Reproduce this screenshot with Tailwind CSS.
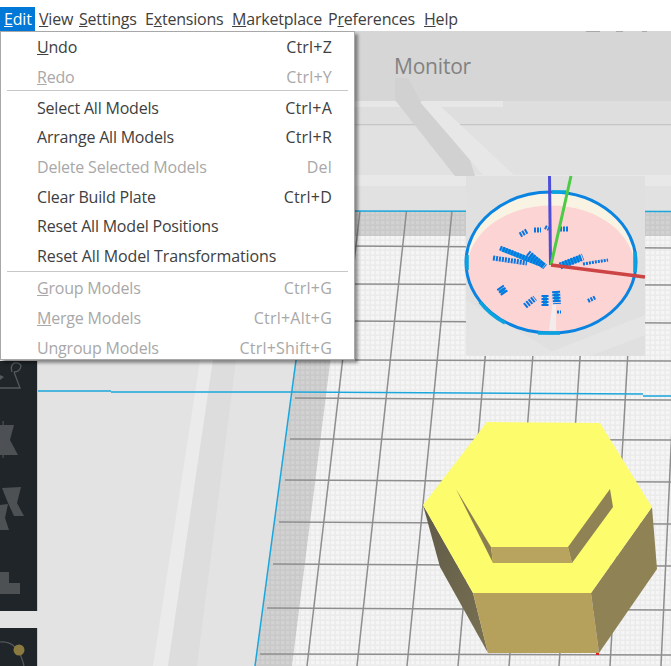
<!DOCTYPE html>
<html lang="en">
<head>
    <meta charset="UTF-8">
    <title>Edit menu</title>
    <script src="https://cdn.jsdelivr.net/npm/@tailwindcss/browser@4"></script>
</head>
<body class="bg-white">
<div class="relative w-[671px] h-[666px] overflow-hidden flex flex-col font-['Open_Sans',sans-serif] text-[16px] tracking-[-0.2px] text-[#404040]">

    <!-- Menu bar -->
    <nav class="h-[31px] pt-[7px] flex items-stretch bg-white shrink-0 leading-[24px]">
        <span class="w-[35px] pl-[4px] bg-[#0078d7] text-white"><u>E</u>dit</span>
        <span class="ml-[4px] w-[40px]"><u>V</u>iew</span>
        <span class="w-[66px]"><u>S</u>ettings</span>
        <span class="w-[87px]">E<u>x</u>tensions</span>
        <span class="w-[96px]"><u>M</u>arketplace</span>
        <span class="w-[96px]">P<u>r</u>eferences</span>
        <span><u>H</u>elp</span>
    </nav>

    <!-- 3D viewport -->
    <main class="relative flex-1 bg-[#e3e3e3]">
        <svg class="block" width="671" height="635" viewBox="0 31 671 635">
            <defs>
                <pattern id="dots" width="5" height="5" patternUnits="userSpaceOnUse">
                    <rect width="5" height="5" fill="#ebebeb"/>
                    <rect x="1" y="1" width="3.4" height="3.4" fill="#f5f5f5"/>
                </pattern>
                <pattern id="dotsDark" width="5" height="5" patternUnits="userSpaceOnUse">
                    <rect width="5" height="5" fill="#c9c9c9"/>
                    <rect x="1" y="1" width="3.4" height="3.4" fill="#d2d2d2"/>
                </pattern>
                <linearGradient id="leftSide" x1="0" y1="0" x2="1" y2="1">
                    <stop offset="0" stop-color="#5f5a48"/>
                    <stop offset="1" stop-color="#7a7152"/>
                </linearGradient>
            </defs>

            <!-- back wall -->
            <rect x="0" y="31" width="671" height="70" fill="#d6d6d6"/>
            <rect x="0" y="101" width="671" height="24" fill="#dedede"/>
            <rect x="0" y="125" width="671" height="86" fill="#e1e1e1"/>
            <rect x="355" y="101" width="148" height="6" fill="#e7e7e7"/>
            <rect x="355" y="175" width="316" height="11" fill="#e8e8e8"/>
            <rect x="355" y="124" width="316" height="1.3" fill="#c6c6c6"/>
            <polygon points="395,78 408,78 420,100 470,160 475,176 455,176 395,100" fill="#d1d1d1"/>
            <polygon points="420,102 436,102 515,176 484,176" fill="#e7e7e7"/>
            <path d="M586 31 H600 M616 31 H623 M642 31 H647" stroke="#a8a8a8" stroke-width="2"/>
            <text x="394" y="74" font-size="21" fill="#828282" font-family="Open Sans, sans-serif">Monitor</text>

            <!-- floor stripes on the left -->
            <polygon points="200,360 213,360 168,666 153,666" fill="#ebebeb"/>
            <polygon points="213,360 236,360 197,666 168,666" fill="#dddddd"/>

            <!-- build plate -->
            <polygon points="316,211 671,211 671,666 255,666" fill="url(#dots)"/>
            <polygon points="316,211 671,211 671,236 346,236 292,666 255,666" fill="url(#dotsDark)"/>

            <!-- grid -->
            <g stroke="#8e8e8e" stroke-width="1.5" fill="none">
                <path d="M345 246 L671 248"/>
                <path d="M345 284 L671 285"/>
                <path d="M345 321 L671 323"/>
                <path d="M355 360 L671 361"/>
                <path d="M295 398 L671 400"/>
                <path d="M290 439 L671 440"/>
                <path d="M285 480 L671 482"/>
                <path d="M279 522 L671 524"/>
                <path d="M273 564 L671 566"/>
                <path d="M267 608 L671 610"/>
                <path d="M260 654 L671 655"/>
                <path d="M360 211 L307 666"/>
                <path d="M406.5 211 L357 666"/>
                <path d="M452 211 L407 666"/>
                <path d="M498 211 L458 666"/>
                <path d="M544 211 L509 666"/>
                <path d="M590 211 L559 666"/>
                <path d="M636 211 L610 666"/>
                <path d="M682 211 L661 666"/>
            </g>

            <!-- plate edge -->
            <g stroke="#1ba6dc" stroke-width="1.5" fill="none">
                <path d="M316 211 L671 211.5"/>
                <path d="M316 211 L255 666"/>
                <path d="M37 391 L111 391 M111 392 L290 392 L643 394 M643 396 L671 396"/>
            </g>

            <!-- nut -->
            <polygon points="423,505 473,593 488,653 440,567" fill="url(#leftSide)"/>
            <polygon points="473,593 591,593 599,653 488,653" fill="#b5a05c"/>
            <polygon points="591,593 652,507 657,569 599,653" fill="#8f8255"/>
            <polygon points="487,422 600,423 652,507 591,593 473,593 423,505" fill="#fdfc6c"/>
            <polygon points="456,489 491,547 493,563" fill="#8a7d4f"/>
            <polygon points="491,547 568,547 572,563 493,563" fill="#b8a35f"/>
            <polygon points="568,547 610,489 613,507 572,563" fill="#8f8255"/>
            <rect x="596" y="653" width="3" height="2" fill="#e02020"/>

            <!-- layer preview -->
            <rect x="466" y="176" width="179" height="180" fill="#e0e0e0"/>
            <polygon points="466,300 560,356 466,356" fill="#e4e4e4"/>
            <polygon points="645,315 645,335 590,356 540,356" fill="#e5e5e5"/>
            <ellipse cx="551" cy="262.5" rx="85" ry="70.5" fill="#f8f3e3"/>
            <ellipse cx="551" cy="269" rx="84" ry="63.5" fill="#fcd4d4"/>
            <polygon points="549,330 553,300 556,300 556,331" fill="#f3ecec"/>
            <ellipse cx="551" cy="262.5" rx="85" ry="70.5" fill="none" stroke="#0a84e0" stroke-width="3"/>
            <g stroke="#0aa3e0" stroke-width="3.6" fill="none">
                <path d="M552 192 H566 M538 333 H560 M635 252 V272 M467 255 V270 M480 302 Q490 315 505 323"/>
            </g>
            <g stroke="#0aa3e0" fill="none">
                <path d="M502 249 L540 264" stroke-width="5"/>
                <path d="M530 255 L544 266" stroke-width="6"/>
                <path d="M562 265 L581 258" stroke-width="6"/>
                <path d="M501 289 L504 293" stroke-width="6"/>
                <path d="M556 293 L557 302" stroke-width="5"/>
                <path d="M545 297 L545 304" stroke-width="4"/>
            </g>
            <g stroke="#0a74e0" fill="none" stroke-dasharray="2 1">
                <path d="M500 248 L543 265" stroke-width="5"/>
                <path d="M493 258 L527 263" stroke-width="5"/>
                <path d="M528 253 L545 267" stroke-width="6"/>
                <path d="M560 266 L583 257" stroke-width="7"/>
                <path d="M583 264 L608 260" stroke-width="3"/>
                <path d="M520 235 L527 231" stroke-width="5"/>
                <path d="M534 230 L541 230" stroke-width="5"/>
                <path d="M545 227 L549 229" stroke-width="4"/>
                <path d="M560 229 L568 229" stroke-width="5"/>
                <path d="M500 287 L505 294" stroke-width="8"/>
                <path d="M525 306 L535 298" stroke-width="6"/>
                <path d="M545 295 L545 306" stroke-width="7"/>
                <path d="M556 291 L557 304" stroke-width="8"/>
                <path d="M588 301 L596 297" stroke-width="4"/>
                <path d="M557 312 L561 312" stroke-width="3"/>
            </g>
            <path d="M549.5 176 L550.5 265" stroke="#4d4dd8" stroke-width="3"/>
            <path d="M571 176 L551 265" stroke="#4ccc44" stroke-width="3"/>
            <path d="M551 265 L645 277" stroke="#cc4444" stroke-width="3.5"/>
        </svg>

        <!-- Left toolbar, mostly covered by the menu -->
        <aside class="absolute left-0 top-[330px] w-[38px] h-[250px] bg-[#1f2528] border-r border-[#c8c8c8]">
            <svg width="37" height="250" viewBox="0 361 37 250">
                <g fill="none" stroke="#555a5d" stroke-width="1.3">
                    <path d="M0 388 L20 388 L14 372"/>
                    <path d="M12 372 Q10 366 14 363 Q20 362 21 366 Q20 372 14 372"/>
                </g>
                <polygon points="0,375 4,377 0,380" fill="#555a5d"/>
                <g fill="#4d5154">
                    <polygon points="0,425 14,425 10,440 18,455 0,455"/>
                    <rect x="2.5" y="421" width="1.2" height="37"/>
                    <polygon points="2,488 21,487 17,503 24,516 14,516 8,503"/>
                    <polygon points="0,505 8,504 5,518 9,530 0,530"/>
                    <polygon points="0,572 9,572 9,583 20,583 20,594 0,594"/>
                </g>
            </svg>
        </aside>
        <aside class="absolute left-0 top-[597px] w-[38px] h-[38px] bg-[#1f2528] border-r border-[#c8c8c8]">
            <svg width="37" height="38" viewBox="0 628 37 38">
                <path d="M0 642 Q18 640 24 666" fill="none" stroke="#555a5d" stroke-width="1.2"/>
                <circle cx="19" cy="650" r="5.5" fill="#8a7a40"/>
            </svg>
        </aside>

        <!-- Edit dropdown -->
        <div class="absolute left-0 top-0 w-[355px] h-[329px] pt-[0.6px] bg-white border border-[#a8a8a8] shadow-[3px_3px_3px_rgba(0,0,0,0.4)]">
            <div class="flex h-[29.6px] items-center justify-between pl-[36px] pr-[22px]"><span><u>U</u>ndo</span><span class="tracking-[0.2px]">Ctrl+Z</span></div>
            <div class="flex h-[29.6px] items-center justify-between pl-[36px] pr-[22px] text-[#a8a8a8]"><span><u>R</u>edo</span><span class="tracking-[0.2px]">Ctrl+Y</span></div>
            <div class="mx-[6px] h-px bg-[#c8c8c8] -mt-[1.6px] mb-[1.8px]"></div>
            <div class="flex h-[29.6px] items-center justify-between pl-[36px] pr-[22px]"><span>Select All Models</span><span class="tracking-[0.2px]">Ctrl+A</span></div>
            <div class="flex h-[29.6px] items-center justify-between pl-[36px] pr-[22px]"><span>Arrange All Models</span><span class="tracking-[0.2px]">Ctrl+R</span></div>
            <div class="flex h-[29.6px] items-center justify-between pl-[36px] pr-[22px] text-[#a8a8a8]"><span>Delete Selected Models</span><span class="tracking-[0.2px]">Del</span></div>
            <div class="flex h-[29.6px] items-center justify-between pl-[36px] pr-[22px]"><span>Clear Build Plate</span><span class="tracking-[0.2px]">Ctrl+D</span></div>
            <div class="flex h-[29.6px] items-center justify-between pl-[36px] pr-[22px]"><span>Reset All Model Positions</span></div>
            <div class="flex h-[29.6px] items-center justify-between pl-[36px] pr-[22px]"><span class="tracking-[-0.1px]">Reset All Model Transformations</span></div>
            <div class="mx-[6px] h-px bg-[#c8c8c8] mb-[2px]"></div>
            <div class="flex h-[29.6px] items-center justify-between pl-[36px] pr-[22px] text-[#a8a8a8]"><span><u>G</u>roup Models</span><span class="tracking-[0.2px]">Ctrl+G</span></div>
            <div class="flex h-[29.6px] items-center justify-between pl-[36px] pr-[22px] text-[#a8a8a8]"><span><u>M</u>erge Models</span><span class="tracking-[0.2px]">Ctrl+Alt+G</span></div>
            <div class="flex h-[29.6px] items-center justify-between pl-[36px] pr-[22px] text-[#a8a8a8]"><span>Ungroup Models</span><span class="tracking-[0.2px]">Ctrl+Shift+G</span></div>
        </div>
    </main>
</div>
</body>
</html>
